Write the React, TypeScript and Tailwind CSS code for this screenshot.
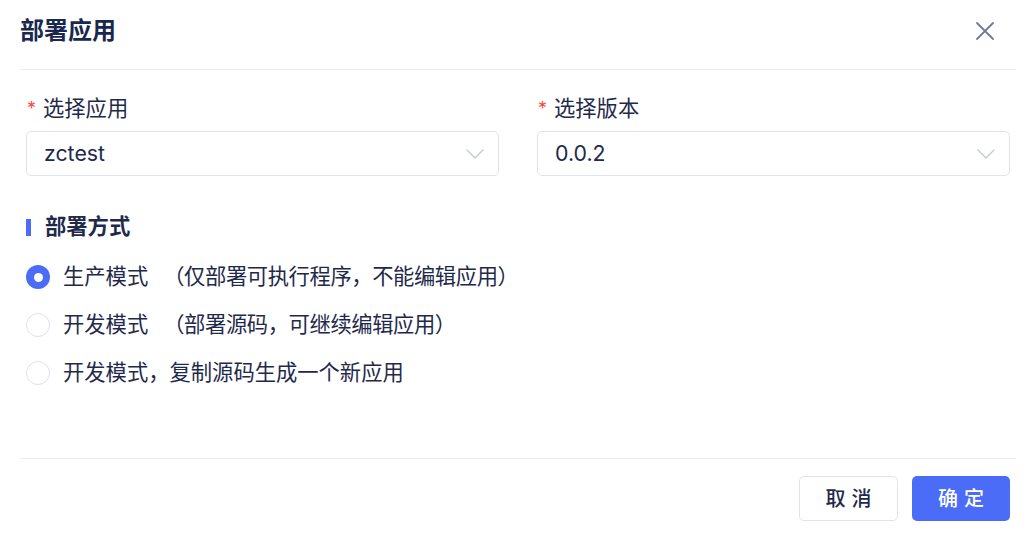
import { useState } from "react";

const font = { fontFamily: '"Inter", "Noto Sans CJK SC", sans-serif' };

function Chevron() {
  return (
    <svg width="18" height="10" viewBox="0 0 18 10" fill="none">
      <path d="M1 1l8 8 8-8" stroke="#c3c9d6" strokeWidth="1.4" strokeLinecap="round" strokeLinejoin="round" />
    </svg>
  );
}

function Field({ label, value }: { label: string; value: string }) {
  return (
    <div className="flex-1 flex flex-col">
      <div className="h-[28px] flex items-center text-[21.3px] text-[#1f2a4b]">
        <span className="text-[#f0503f] text-[18px] w-[17px] pl-[1px] -mt-[2px]">*</span>
        <span>{label}</span>
      </div>
      <div className="mt-[8px] h-[45px] border border-[#dfe3ec] rounded-[5px] flex items-center justify-between pl-[17px] pr-[14px] text-[21.3px] text-[#1f2a4b]">
        <span>{value}</span>
        <Chevron />
      </div>
    </div>
  );
}

const options = [
  { main: "生产模式", note: "（仅部署可执行程序，不能编辑应用）" },
  { main: "开发模式", note: "（部署源码，可继续编辑应用）" },
  { main: "开发模式，复制源码生成一个新应用", note: "" },
];

export default function App() {
  const [mode, setMode] = useState(0);

  return (
    <div className="w-[1032px] h-[542px] bg-white flex flex-col" style={font}>
      <div className="ml-5 mr-4 h-[70px] border-b border-[#e9ecf3] flex items-center justify-between pb-[8px]">
        <h1 className="text-[24px] font-semibold text-[#1a2850]">部署应用</h1>
        <svg width="20" height="20" viewBox="0 0 20 20" className="mr-[21px]">
          <path d="M2 2l16 16M18 2L2 18" stroke="#6e7b98" strokeWidth="1.8" strokeLinecap="round" />
        </svg>
      </div>

      <div className="flex-1 pl-[26px] pr-[22px] pt-[25px]">
        <div className="flex gap-[38px]">
          <Field label="选择应用" value="zctest" />
          <Field label="选择版本" value="0.0.2" />
        </div>

        <div className="mt-[37px] h-[28px] flex items-center">
          <span className="w-[5px] h-[17px] bg-[#4a6cf7] mr-[14px]" />
          <span className="text-[21.3px] font-semibold text-[#1f2a4b]">部署方式</span>
        </div>

        <div className="mt-[12px] flex flex-col">
          {options.map((o, i) => (
            <label key={i} className="h-[48px] flex items-center cursor-pointer" onClick={() => setMode(i)}>
              {mode === i ? (
                <span className="w-[24px] h-[24px] rounded-full bg-[#4a6cf7] flex items-center justify-center">
                  <span className="w-[9px] h-[9px] rounded-full bg-white" />
                </span>
              ) : (
                <span className="w-[24px] h-[24px] rounded-full border-[1.5px] border-[#dde2ec] bg-white" />
              )}
              <span className="ml-[13px] text-[21.3px] text-[#1f2a4b]">{o.main}</span>
              {o.note && (
                <span className="ml-[15px] text-[21.3px] text-[#1f2a4b] tracking-[-0.4px]">{o.note}</span>
              )}
            </label>
          ))}
        </div>
      </div>

      <div className="ml-5 mr-4 border-t border-[#e9ecf3] h-[84px] flex items-start justify-end gap-[14px] pt-[17px] pr-[6px]">
        <button className="w-[99px] h-[45px] border-[1.5px] border-[#dfe3ec] rounded-[5px] bg-white text-[20px] font-medium text-[#1f2a4b] tracking-[6px] pl-[6px]">
          取消
        </button>
        <button className="w-[98px] h-[45px] rounded-[5px] bg-[#4a6cf7] text-[20px] font-medium text-white tracking-[6px] pl-[6px]">
          确定
        </button>
      </div>
    </div>
  );
}
